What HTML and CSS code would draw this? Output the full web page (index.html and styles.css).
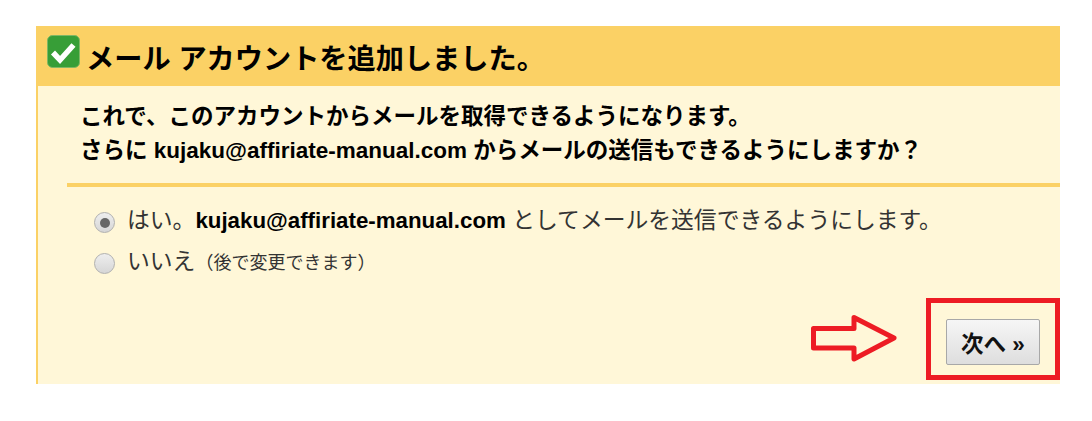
FILE: index.html
```html
<!DOCTYPE html>
<html lang="ja">
<head>
    <meta charset="UTF-8">
    <title>メール アカウントを追加しました。</title>
    <link rel="stylesheet" href="styles.css">
</head>
<body>

    <div class="panel">
        <!-- Header -->
        <div class="panel-head">
            <svg class="check-icon" width="33" height="33" viewBox="0 0 33 33">
                <rect x="0.5" y="0.5" width="32" height="32" rx="5" fill="#379e37" stroke="#7fb765"/>
                <path d="M6 17.5 L13 25 L26.5 10" fill="none" stroke="#fff" stroke-width="5.5"/>
            </svg>
            <h1>メール アカウントを追加しました。</h1>
        </div>

        <div class="panel-body">
            <div class="intro">
                <p>これで、このアカウントからメールを取得できるようになります。</p>
                <p>さらに kujaku@affiriate-manual.com からメールの送信もできるようにしますか？</p>
            </div>

            <div class="options">
                <div class="option">
                    <span class="radio checked"></span>
                    <span>はい。<b>kujaku@affiriate-manual.com</b> としてメールを送信できるようにします。</span>
                </div>
                <div class="option">
                    <span class="radio"></span>
                    <span>いいえ<small>（後で変更できます）</small></span>
                </div>
            </div>

            <!-- Next button with red annotation -->
            <div class="actions">
                <svg class="arrow" width="88" height="48" viewBox="0 0 88 48">
                    <path d="M3.5 14.5 H44 V3.5 L84 24 L44 45 V34 H3.5 Z" fill="none" stroke="#ed1c24" stroke-width="5" stroke-linejoin="round"/>
                </svg>
                <div class="highlight">
                    <button class="next-btn">次へ »</button>
                </div>
            </div>
        </div>
    </div>

</body>
</html>
```

FILE: styles.css
```css
/* Page */
body {
    font-family: "Liberation Sans", Arial, "Noto Sans CJK JP", sans-serif;
    background-color: #fff;
    color: #000;
    margin: 0;
    padding: 26px 0 0 36px;
}

/* Panel */
.panel {
    width: 1024px;
    height: 358px;
    background-color: #fff7d8;
    border-left: 2px solid #fbd165;
    box-sizing: border-box;
    display: flex;
    flex-direction: column;
}

/* Header */
.panel-head {
    height: 60px;
    margin-left: -2px;
    background-color: #fbd165;
    display: flex;
    align-items: flex-start;
    flex-shrink: 0;
}

.check-icon {
    margin: 9px 0 0 11px;
}

h1 {
    font-size: 28.2px;
    font-weight: bold;
    line-height: 36px;
    margin: 15px 0 0 6px;
}

/* Intro text */
.panel-body {
    flex: 1;
    display: flex;
    flex-direction: column;
}

.intro {
    margin-left: 29px;
    padding: 14px 15px 16px 13px;
    border-bottom: 4px solid #fbd165;
    font-size: 22.5px;
    font-weight: bold;
    line-height: 33.5px;
}

.intro p {
    margin: 0;
}

/* Radio options */
.options {
    margin: 14px 0 0 56px;
    font-size: 22.8px;
    color: #333;
}

.option {
    display: flex;
    align-items: flex-start;
    height: 41px;
    line-height: 38px;
    gap: 12px;
}

.option b {
    color: #000;
    font-size: 22.3px;
}

.option small {
    font-size: 18px;
}

.radio {
    width: 19px;
    height: 19px;
    margin-top: 11px;
    border: 1px solid #b0b0b0;
    border-radius: 50%;
    background: linear-gradient(#eee, #d6d6d6);
    flex-shrink: 0;
    display: flex;
    justify-content: center;
    align-items: center;
}

.radio.checked::after {
    content: "";
    width: 10px;
    height: 10px;
    border-radius: 50%;
    background-color: #666;
}

/* Footer */
.actions {
    display: flex;
    justify-content: flex-end;
    align-items: flex-start;
    margin-top: 15px;
}

.arrow {
    margin: 16px 28px 0 0;
}

.highlight {
    width: 134px;
    height: 82px;
    box-sizing: border-box;
    border: 5px solid #ed1c24;
    padding-top: 6px;
    display: flex;
    justify-content: center;
    align-items: center;
}

.next-btn {
    width: 94px;
    height: 46px;
    font-family: inherit;
    font-size: 22.5px;
    font-weight: bold;
    color: #111;
    background: linear-gradient(#f6f6f6, #dedede);
    border: 1px solid #a8a8a8;
    border-radius: 2px;
    padding: 0;
}
```
